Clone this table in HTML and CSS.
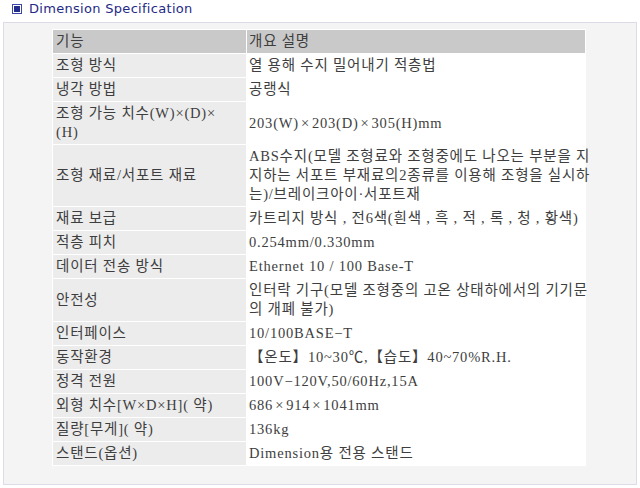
FILE: index.html
```html
<!DOCTYPE html>
<html lang="ko">
<head>
<meta charset="utf-8">
<title>Dimension Specification</title>
<link rel="stylesheet" href="styles.css">
</head>
<body>
<div class="title">
  <span class="title-icon"><span class="title-icon-inner"></span></span>
  <span class="title-text">Dimension Specification</span>
</div>
<div class="panel">
  <table class="spec">
    <colgroup><col class="col-k"><col class="col-v"></colgroup>
    <tr class="head"><td class="k">기능</td><td class="v">개요 설명</td></tr>
    <tr><td class="k">조형 방식</td><td class="v">열 용해 수지 밀어내기 적층법</td></tr>
    <tr><td class="k">냉각 방법</td><td class="v">공랭식</td></tr>
    <tr><td class="k">조형 가능 치수(W)×(D)×<br>(H)</td><td class="v">203(W)<span class="mul">×</span>203(D)<span class="mul">×</span>305(H)mm</td></tr>
    <tr><td class="k">조형 재료/서포트 재료</td><td class="v">ABS수지(모델 조형료와 조형중에도 나오는 부분을 지<br>지하는 서포트 부재료의2종류를 이용해 조형을 실시하<br>는)/브레이크아이·서포트재</td></tr>
    <tr><td class="k">재료 보급</td><td class="v">카트리지 방식 , 전6색(흰색 , 흑 , 적 , 록 , 청 , 황색)</td></tr>
    <tr><td class="k">적층 피치</td><td class="v">0.254mm/0.330mm</td></tr>
    <tr><td class="k">데이터 전송 방식</td><td class="v">Ethernet 10 / 100 Base-T</td></tr>
    <tr><td class="k">안전성</td><td class="v">인터락 기구(모델 조형중의 고온 상태하에서의 기기문<br>의 개폐 불가)</td></tr>
    <tr><td class="k">인터페이스</td><td class="v">10/100BASE−T</td></tr>
    <tr><td class="k">동작환경</td><td class="v">【온도】10~30℃,【습도】40~70%R.H.</td></tr>
    <tr><td class="k">정격 전원</td><td class="v">100V−120V,50/60Hz,15A</td></tr>
    <tr><td class="k">외형 치수[W×D×H]( 약)</td><td class="v">686<span class="mul">×</span>914<span class="mul">×</span>1041mm</td></tr>
    <tr><td class="k">질량[무게]( 약)</td><td class="v">136kg</td></tr>
    <tr><td class="k">스탠드(옵션)</td><td class="v">Dimension용 전용 스탠드</td></tr>
  </table>
</div>
</body>
</html>
```
FILE: styles.css
```css
html, body {
  margin: 0;
  padding: 0;
  background: #ffffff;
}
body {
  width: 640px;
  height: 488px;
  overflow: hidden;
}
.title {
  display: flex;
  align-items: center;
  height: 22px;
  padding-left: 12px;
  box-sizing: border-box;
  padding-bottom: 5px;
}
.title-icon {
  width: 10px;
  height: 10px;
  box-sizing: border-box;
  border: 1px solid #3a46a8;
  background: #ffffff;
  display: flex;
  align-items: center;
  justify-content: center;
  margin-right: 7px;
}
.title-icon-inner {
  width: 6px;
  height: 6px;
  background: #232c8c;
}
.title-text {
  font-family: "DejaVu Sans", Verdana, sans-serif;
  font-size: 13px;
  color: #1f2a86;
  letter-spacing: 0.3px;
}
.panel {
  margin: 0 3px;
  width: 634px;
  height: 463px;
  box-sizing: border-box;
  border: 1px solid #dcdce8;
  background: #f4f4f5;
  padding: 6px 0 0 48px;
}
.spec {
  border-collapse: separate;
  border-spacing: 1px;
  table-layout: fixed;
  background: #ffffff;
  width: 534px;
  font-family: "Liberation Serif", "Noto Sans CJK KR", serif;
  font-size: 14.5px;
  letter-spacing: 0.8px;
  line-height: 19px;
  color: #3e3e3e;
}
.col-k {
  width: 193px;
}
.col-v {
  width: 338px;
}
.spec td {
  padding: 2px 0 2px 3px;
  vertical-align: middle;
  white-space: nowrap;
  overflow: visible;
}
.spec .k {
  background: #ececec;
}
.spec .v {
  background: #ffffff;
  padding-left: 2px;
}
.spec .head td {
  background: #c9c9c9;
}
.mul {
  margin: 0 2px;
}
```
